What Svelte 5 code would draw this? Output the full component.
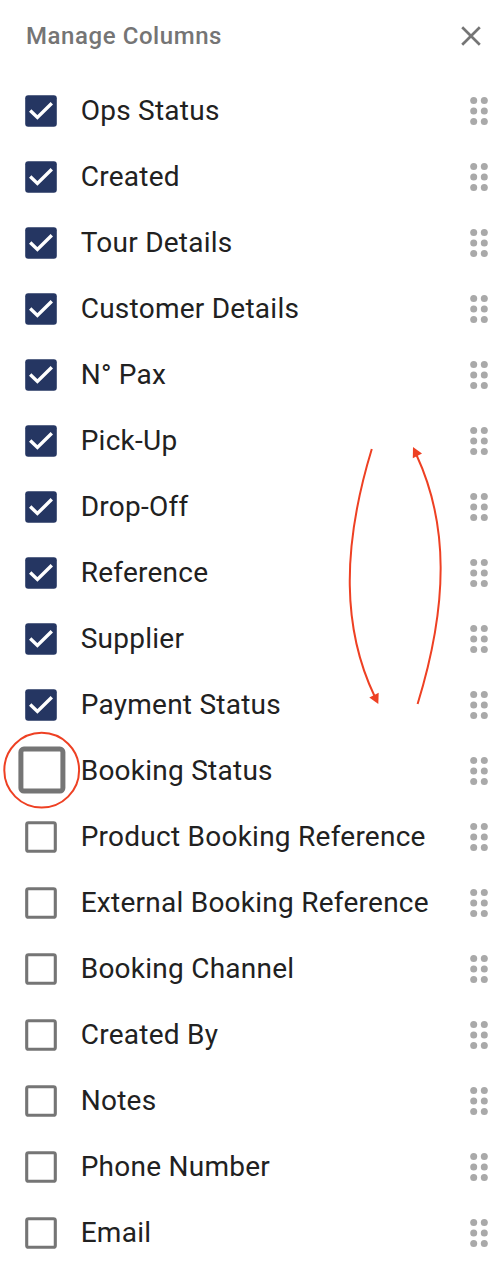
<script>
  const columns = [
    ['Ops Status', true],
    ['Created', true],
    ['Tour Details', true],
    ['Customer Details', true],
    ['N° Pax', true],
    ['Pick-Up', true],
    ['Drop-Off', true],
    ['Reference', true],
    ['Supplier', true],
    ['Payment Status', true],
    ['Booking Status', false, true],
    ['Product Booking Reference', false],
    ['External Booking Reference', false],
    ['Booking Channel', false],
    ['Created By', false],
    ['Notes', false],
    ['Phone Number', false],
    ['Email', false]
  ].map(([label, checked, highlighted = false]) => ({ label, checked, highlighted }));
</script>

<main class="panel">
  <header class="header">
    <h1>Manage Columns</h1>
    <svg class="close" width="22" height="22" viewBox="0 0 22 22" aria-hidden="true">
      <path d="M2.2 2.2 19.8 19.8M19.8 2.2 2.2 19.8" fill="none" stroke="#757575" stroke-width="2.7" />
    </svg>
  </header>

  <ul class="list">
    {#each columns as column}
      <li class="row">
        <span class="box">
          {#if column.highlighted}
            <svg class="focus" width="80" height="80" viewBox="0 0 80 80" aria-hidden="true">
              <circle cx="40.7" cy="40.2" r="37.4" fill="#fff" stroke="#ee4023" stroke-width="2" />
              <rect x="19.9" y="19.1" width="42" height="42" rx="3" fill="#fff" stroke="#757575" stroke-width="5" />
            </svg>
          {:else if column.checked}
            <svg width="32" height="32" viewBox="0 0 32 32" aria-hidden="true">
              <rect x="0.2" y="0.2" width="31.6" height="31.6" rx="3" fill="#253662" />
              <path d="M5.2 15.6 12.4 22.5 26.8 8.3" fill="none" stroke="#fff" stroke-width="3.4" />
            </svg>
          {:else}
            <svg width="32" height="32" viewBox="0 0 32 32" aria-hidden="true">
              <rect x="1.7" y="1.7" width="28.6" height="28.6" rx="1.8" fill="#fff" stroke="#757575" stroke-width="3.1" />
            </svg>
          {/if}
        </span>
        <span class="label">{column.label}</span>
        <svg class="grip" width="20" height="30" viewBox="0 0 20 30" aria-hidden="true">
          {#each [4.5, 15, 25.5] as y}
            <circle cx="4.7" cy={y} r="3.5" />
            <circle cx="15.3" cy={y} r="3.5" />
          {/each}
        </svg>
      </li>
    {/each}
  </ul>

  <svg class="arrows" width="110" height="270" viewBox="340 440 110 270" aria-hidden="true">
    <g fill="none" stroke="#ee4023" stroke-width="2">
      <path d="M371.8 449C341 550 343 630 374.5 696" />
      <path d="M417.6 704C449 602 448 523 416.5 455" />
    </g>
    <path d="M378.3 704 378.7 692.7 369.3 697.6Z" fill="#ee4023" />
    <path d="M413 447 412.8 458.3 422 453.6Z" fill="#ee4023" />
  </svg>
</main>

<style>
  :global(body) {
    background: #fff;
  }
  .panel {
    position: relative;
    box-sizing: border-box;
    width: 504px;
    height: 1274px;
    font-family: Roboto, sans-serif;
    background: #fff;
  }
  .header {
    display: flex;
    align-items: center;
    justify-content: space-between;
    box-sizing: border-box;
    height: 78px;
    padding: 0 22px 6px 26px;
  }
  h1 {
    margin: 0;
    color: #757575;
    font-size: 24px;
    font-weight: 500;
    line-height: 32px;
    letter-spacing: 0.57px;
  }
  .list {
    margin: 0;
    padding: 0;
    list-style: none;
  }
  .row {
    display: flex;
    align-items: center;
    height: 66px;
    padding: 0 15px 0 25px;
  }
  .box {
    position: relative;
    flex: none;
    width: 32px;
    height: 32px;
    margin-right: 23.7px;
  }
  svg {
    display: block;
  }
  .focus {
    position: absolute;
    left: -24px;
    top: -25px;
  }
  .label {
    flex: 1;
    color: #212121;
    font-size: 28px;
    line-height: 40px;
    letter-spacing: 0.25px;
    white-space: nowrap;
  }
  .grip {
    flex: none;
    fill: #a9a9a9;
  }
  .arrows {
    position: absolute;
    left: 340px;
    top: 440px;
  }
</style>
